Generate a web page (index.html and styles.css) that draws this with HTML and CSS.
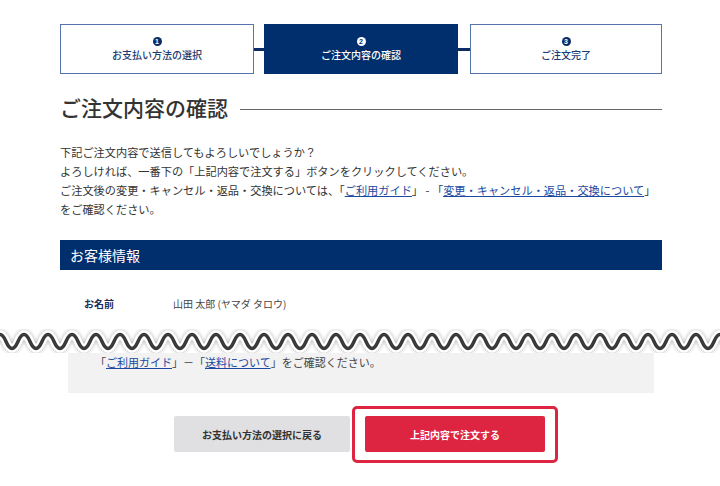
FILE: index.html
```html
<!DOCTYPE html>
<html lang="ja">
<head>
<meta charset="utf-8">
<title>ご注文内容の確認</title>
<link rel="stylesheet" href="styles.css">
</head>
<body>
<div class="page">
  <ol class="steps">
    <li class="step"><span class="num">1</span><span class="label">お支払い方法の選択</span></li>
    <li class="link"></li>
    <li class="step current"><span class="num">2</span><span class="label">ご注文内容の確認</span></li>
    <li class="link"></li>
    <li class="step"><span class="num">3</span><span class="label">ご注文完了</span></li>
  </ol>

  <h1 class="title">ご注文内容の確認</h1>

  <p class="lead">下記ご注文内容で送信してもよろしいでしょうか？<br>
  よろしければ、一番下の「上記内容で注文する」ボタンをクリックしてください。<br>
  ご注文後の変更・キャンセル・返品・交換については、「<a href="#">ご利用ガイド</a>」 - 「<a href="#">変更・キャンセル・返品・交換について</a>」<br>
  をご確認ください。</p>

  <h2 class="section">お客様情報</h2>
  <dl class="info">
    <dt>お名前</dt>
    <dd>山田 太郎 (ヤマダ タロウ)</dd>
  </dl>
</div>

<svg class="wave" width="720" height="24" viewBox="0 0 720 24" aria-hidden="true">
  <defs>
    <filter id="glow" x="-5%" y="-100%" width="110%" height="300%">
      <feGaussianBlur in="SourceAlpha" stdDeviation="2"/>
      <feComponentTransfer><feFuncA type="linear" slope="0.35"/></feComponentTransfer>
      <feMerge><feMergeNode/><feMergeNode in="SourceGraphic"/></feMerge>
    </filter>
    <path id="w" d="M-6 12.5 q6 -14 12 0 t12 0 t12 0 t12 0 t12 0 t12 0 t12 0 t12 0 t12 0 t12 0 t12 0 t12 0 t12 0 t12 0 t12 0 t12 0 t12 0 t12 0 t12 0 t12 0 t12 0 t12 0 t12 0 t12 0 t12 0 t12 0 t12 0 t12 0 t12 0 t12 0 t12 0 t12 0 t12 0 t12 0 t12 0 t12 0 t12 0 t12 0 t12 0 t12 0 t12 0 t12 0 t12 0 t12 0 t12 0 t12 0 t12 0 t12 0 t12 0 t12 0 t12 0 t12 0 t12 0 t12 0 t12 0 t12 0 t12 0 t12 0 t12 0 t12 0 t12 0 t12 0 t12 0 t12 0"/>
  </defs>
  <use href="#w" fill="none" stroke="#fff" stroke-width="8" filter="url(#glow)"/>
  <use href="#w" fill="none" stroke="#3a3a3a" stroke-width="3.5"/>
</svg>

<div class="page bottom">
  <div class="notice">「<a href="#">ご利用ガイド</a>」－「<a href="#">送料について</a>」をご確認ください。</div>
  <div class="actions">
    <a class="btn back" href="#">お支払い方法の選択に戻る</a>
    <a class="btn order" href="#">上記内容で注文する<span class="mark"></span></a>
  </div>
</div>
</body>
</html>
```
FILE: styles.css
```css
* { box-sizing: border-box; }
html, body { margin: 0; padding: 0; background: #fff; }
body {
  font-family: "Noto Sans CJK JP", "Noto Sans", sans-serif;
  color: #333;
  width: 720px;
  padding-bottom: 30px;
}
a { color: #1b48a0; text-decoration: underline; }

.page { width: 602px; margin-left: 60px; padding-top: 24px; }
.page.bottom { padding-top: 0; }

/* steps */
.steps { list-style: none; margin: 0; padding: 0; display: flex; align-items: center; height: 50px; }
.step {
  width: 194px; height: 50px;
  border: 1px solid #5573ad;
  display: flex; flex-direction: column; align-items: center; justify-content: center;
  gap: 3px; color: #1d3a72;
}
.step .num {
  width: 9px; height: 9px; border-radius: 50%;
  background: #0c2c66; color: #fff;
  font-size: 7px; line-height: 9px; font-weight: 700; text-align: center;
  font-family: "Liberation Sans", sans-serif;
}
.step .label { font-size: 10px; line-height: 12px; font-weight: 500; }
.step.current { background: #012f6d; border-color: #012f6d; color: #fff; }
.step.current .num { background: #fff; color: #012f6d; }
.link { width: 10px; height: 3px; background: #0c2c66; }
.steps .link:nth-child(4) { width: 12px; }
.steps .step:last-child { width: 192px; }

/* title */
.title {
  margin: 18px 0 0; font-size: 21px; line-height: 30px; font-weight: 500; color: #333;
  display: flex; align-items: center;
}
.title::after { content: ""; flex: 1; height: 1px; background: #666; margin-left: 12px; margin-top: 4px; }

.lead { margin: 21px 0 0; font-size: 11.2px; line-height: 19px; color: #333; white-space: nowrap; }

.section {
  margin: 21px 0 0; height: 30px; background: #012f6d; color: #fff;
  font-size: 14px; line-height: 30px; font-weight: 400; padding-left: 10px;
}

.info { margin: 24px 0 0; display: flex; font-size: 10px; line-height: 20px; padding-left: 24px; height: 20px; }
.info dt { width: 89px; font-weight: 700; color: #1d2d55; }
.info dd { margin: 0; color: #444; }

.wave { display: block; margin-top: 15px; }

.notice {
  margin-left: 8px; width: 586px; background: #f2f2f2;
  padding: 0 0 21px 27px; font-size: 11px; line-height: 19px; color: #444;
}

.actions { display: flex; justify-content: center; gap: 15px; margin-top: 23px; padding-right: 3px; }
.btn {
  height: 36px; display: flex; align-items: center; justify-content: center;
  font-size: 10px; font-weight: 700; text-decoration: none; border-radius: 2px;
}
.btn.back { width: 176px; background: #e0e0e2; color: #333; }
.btn.order { width: 180px; background: #dd2440; color: #fff; position: relative; }
.mark {
  position: absolute; left: -13px; right: -13px; top: -10px; bottom: -11px;
  border: 3px solid #dd2440; border-radius: 5px; pointer-events: none;
}
```
